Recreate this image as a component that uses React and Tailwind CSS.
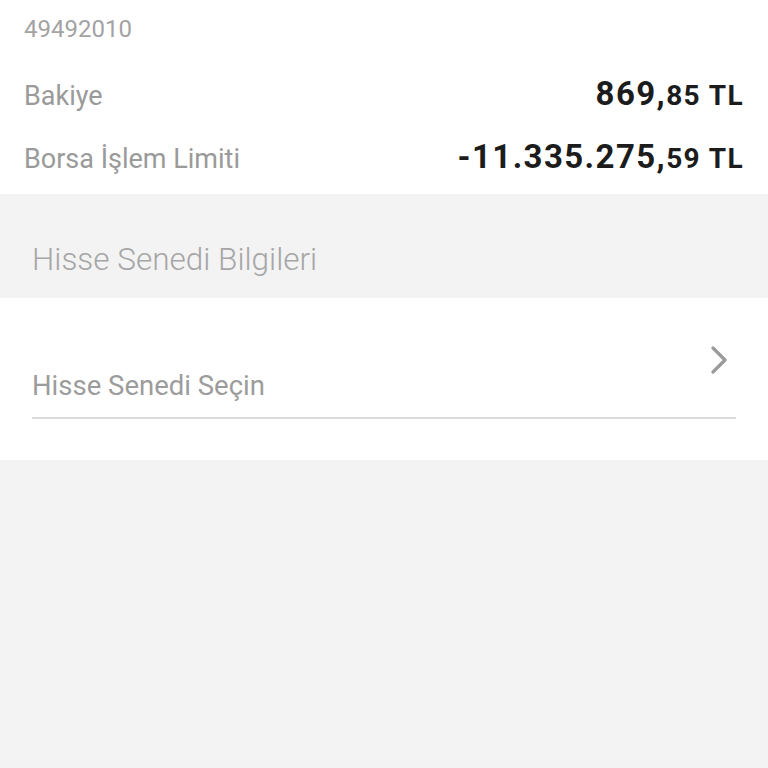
import React from 'react';

const Row = ({ label, whole, frac }) => (
  <div className="h-[63px] pt-[16px] flex items-baseline justify-between">
    <span className="text-[27px] leading-[32px] text-[#9a9a9a]">{label}</span>
    <span className="font-bold text-[#1c1c1c] tracking-[1.4px] leading-[32px]">
      <span className="text-[33px]">{whole}</span>
      <span className="text-[28px]">{frac} TL</span>
    </span>
  </div>
);

export default function App() {
  return (
    <div className="min-h-[768px] bg-[#f3f3f3] font-['Roboto',sans-serif]">
      {/* Account summary */}
      <div className="bg-white px-6 pt-[13px] h-[194px]">
        <div className="text-[24px] text-[#a3a3a3] leading-[32px]">49492010</div>
        <div className="mt-[17px]">
          <Row label="Bakiye" whole="869," frac="85" />
          <Row label="Borsa İşlem Limiti" whole="-11.335.275," frac="59" />
        </div>
      </div>

      {/* Section header */}
      <div className="h-[104px] px-8 pt-[51px]">
        <div className="text-[31.5px] font-light text-[#a6a6a6] leading-[30px]">Hisse Senedi Bilgileri</div>
      </div>

      {/* Stock picker */}
      <div className="bg-white h-[162px] px-8 pt-[48px]">
        <button className="w-full flex items-end justify-between border-b-2 border-[#dcdcdc] pb-[15px] text-left">
          <span className="text-[27.5px] text-[#9c9c9c] leading-[32px]">Hisse Senedi Seçin</span>
          <svg width="22" height="30" viewBox="0 0 22 30" className="mb-[26px] mr-[4px]">
            <path d="M3 2 L15 14 L3 26" fill="none" stroke="#9a9a9a" strokeWidth="3.2" strokeLinecap="round" strokeLinejoin="round" />
          </svg>
        </button>
      </div>
    </div>
  );
}
